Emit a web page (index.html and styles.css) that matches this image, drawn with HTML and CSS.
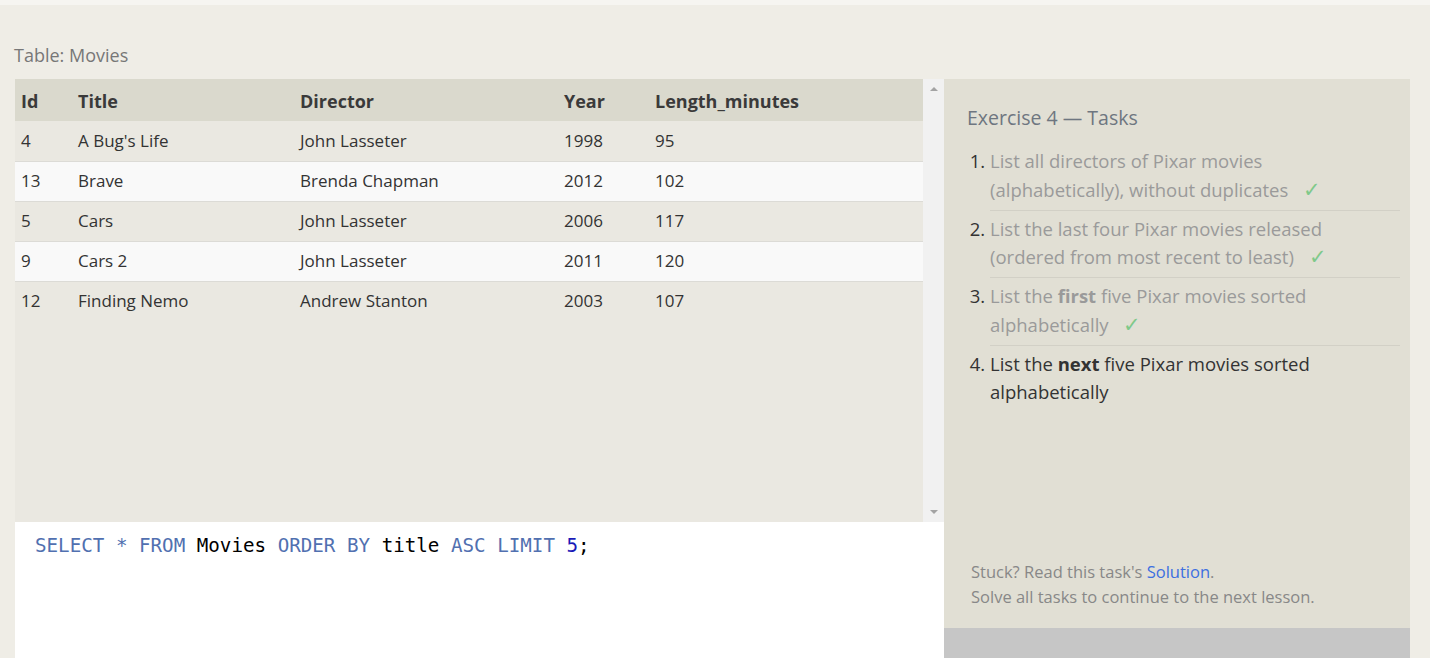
FILE: index.html
```html
<!DOCTYPE html>
<html>
<head>
<meta charset="utf-8">
<link rel="stylesheet" href="styles.css">
</head>
<body>
<div class="topbar"></div>
<div class="main">
  <div class="caption">Table: Movies</div>
  <div class="workspace">
    <div class="left">
      <div class="results">
        <div class="table-wrap">
          <table class="data">
            <thead>
              <tr><th class="c-id">Id</th><th class="c-title">Title</th><th class="c-dir">Director</th><th class="c-year">Year</th><th class="c-len">Length_minutes</th></tr>
            </thead>
            <tbody>
              <tr><td>4</td><td>A Bug's Life</td><td>John Lasseter</td><td>1998</td><td>95</td></tr>
              <tr><td>13</td><td>Brave</td><td>Brenda Chapman</td><td>2012</td><td>102</td></tr>
              <tr><td>5</td><td>Cars</td><td>John Lasseter</td><td>2006</td><td>117</td></tr>
              <tr><td>9</td><td>Cars 2</td><td>John Lasseter</td><td>2011</td><td>120</td></tr>
              <tr><td>12</td><td>Finding Nemo</td><td>Andrew Stanton</td><td>2003</td><td>107</td></tr>
            </tbody>
          </table>
        </div>
        <div class="scrollbar">
          <span class="arrow up"></span>
          <span class="arrow down"></span>
        </div>
      </div>
      <div class="editor">
        <pre class="code"><span class="kw">SELECT</span> <span class="kw">*</span> <span class="kw">FROM</span> Movies <span class="kw">ORDER</span> <span class="kw">BY</span> title <span class="kw">ASC</span> <span class="kw">LIMIT</span> <span class="num">5</span>;</pre>
      </div>
    </div>
    <div class="right">
      <div class="tasks">
        <h2 class="tasks-title">Exercise 4 — Tasks</h2>
        <ol class="task-list">
          <li class="done">List all directors of Pixar movies (alphabetically), without duplicates <span class="check">✓</span></li>
          <li class="done">List the last four Pixar movies released (ordered from most recent to least) <span class="check">✓</span></li>
          <li class="done">List the <b>first</b> five Pixar movies sorted alphabetically <span class="check">✓</span></li>
          <li class="current">List the <b>next</b> five Pixar movies sorted alphabetically</li>
        </ol>
        <div class="hint">
          <div>Stuck? Read this task's <a class="link" href="#">Solution</a>.</div>
          <div>Solve all tasks to continue to the next lesson.</div>
        </div>
      </div>
      <div class="actions"></div>
    </div>
  </div>
</div>
</body>
</html>
```
FILE: styles.css
```css
html, body {
  margin: 0;
  padding: 0;
}
body {
  background: #efede6;
  font-family: "Open Sans", "Noto Sans", sans-serif;
  color: #333;
  overflow: hidden;
  height: 658px;
}
.topbar {
  height: 5px;
  background: #f6f5f1;
}
.main {
  padding: 0 20px 0 14px;
}
.caption {
  margin-top: 38px;
  height: 24px;
  line-height: 24px;
  font-size: 18px;
  color: #777;
  margin-bottom: 12px;
}
.workspace {
  display: flex;
  margin-left: 1px;
  width: 1395px;
}
.left {
  width: 929px;
  display: flex;
  flex-direction: column;
}
.results {
  display: flex;
  height: 443px;
  background: #eae8e1;
}
.table-wrap {
  flex: 1;
}
.data {
  width: 100%;
  border-collapse: collapse;
  font-size: 17px;
  table-layout: fixed;
}
.data th,
.data td {
  box-sizing: border-box;
}
.data th {
  background: #dad9cd;
  text-align: left;
  font-weight: 700;
  color: #3a3a3a;
  height: 42px;
  padding: 1px 0 0 6px;
  font-size: 18px;
}
.c-id { width: 57px; }
.c-title { width: 222px; }
.c-dir { width: 264px; }
.c-year { width: 91px; }
.data td {
  height: 40px;
  padding: 0 0 1px 6px;
  color: #333;
  border-bottom: 1px solid #dcdbd6;
}
.data tbody tr {
  height: 40px;
}
.data tbody tr:nth-child(odd) td {
  background: #eae8e1;
}
.data tbody tr:nth-child(even) td {
  background: #f9f9f9;
}
.data tbody tr:last-child td {
  border-bottom: none;
}
.scrollbar {
  width: 21px;
  background: #f1f1f1;
  display: flex;
  flex-direction: column;
  justify-content: space-between;
  align-items: center;
  padding: 8px 0;
  box-sizing: border-box;
}
.arrow {
  width: 0;
  height: 0;
  border-left: 4px solid transparent;
  border-right: 4px solid transparent;
}
.arrow.up {
  border-bottom: 4px solid #a3a3a3;
}
.arrow.down {
  border-top: 4px solid #a3a3a3;
}
.editor {
  background: #fff;
  height: 140px;
}
.code {
  margin: 0;
  padding: 12px 0 0 20px;
  font-family: "DejaVu Sans Mono", "Liberation Mono", monospace;
  font-size: 19.2px;
  line-height: 24px;
  color: #000;
}
.kw {
  color: #5170b0;
}
.num {
  color: #1a1ab8;
}
.right {
  width: 466px;
  display: flex;
  flex-direction: column;
}
.tasks {
  background: #e1dfd4;
  height: 549px;
  box-sizing: border-box;
  padding: 24px 10px 0 23px;
  display: flex;
  flex-direction: column;
}
.tasks-title {
  margin: 0;
  font-weight: 400;
  font-size: 19.5px;
  line-height: 30px;
  color: #6e7680;
}
.task-list {
  margin: 10px 0 0 0;
  padding: 0 0 0 23px;
  font-size: 18.5px;
  line-height: 28.5px;
}
.task-list li {
  padding: 4px 20px 5.5px 0;
  border-bottom: 1px solid #d2d0c6;
}
.task-list li:last-child {
  border-bottom: none;
}
.task-list li::marker {
  color: #333;
}
.task-list li.done {
  color: #9a9a9a;
}
.task-list li.current {
  color: #333;
}
.task-list b {
  font-weight: 700;
}
.check {
  color: #7fc98a;
  margin-left: 10px;
  font-size: 21px;
  line-height: 0;
}
.hint {
  margin-top: auto;
  padding: 0 0 19px 4px;
  font-size: 16.5px;
  line-height: 25px;
  color: #888;
}
.link {
  color: #3d6fe0;
  text-decoration: none;
}
.actions {
  background: #c6c6c6;
  height: 30px;
}
```
